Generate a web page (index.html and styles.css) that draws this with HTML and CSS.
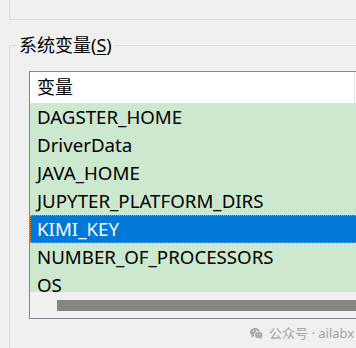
FILE: index.html
```html
<!DOCTYPE html>
<html lang="zh-CN">
<head>
<meta charset="utf-8">
<link rel="stylesheet" href="styles.css">
</head>
<body>
<div class="page">
  <div class="prev-group"></div>
  <div class="group">
    <div class="legend">系统变量(<span class="ul">S</span>)</div>
    <div class="listbox">
      <div class="header"><div class="col">变量</div></div>
      <div class="rows">
        <div class="row">DAGSTER_HOME</div>
        <div class="row">DriverData</div>
        <div class="row">JAVA_HOME</div>
        <div class="row">JUPYTER_PLATFORM_DIRS</div>
        <div class="row selected">KIMI_KEY</div>
        <div class="row">NUMBER_OF_PROCESSORS</div>
        <div class="row">OS</div>
      </div>
      <div class="hscroll"><div class="thumb"></div></div>
    </div>
  </div>
  <div class="watermark">
    <svg class="wx" width="13" height="11" viewBox="0 0 13 11">
      <ellipse cx="5" cy="4.3" rx="5" ry="4.2" fill="#a8a8a8"/>
      <path d="M1.8 7.2 L1.2 9.2 L3.6 8" fill="#a8a8a8"/>
      <ellipse cx="8.8" cy="7" rx="4.2" ry="3.5" fill="#a8a8a8" stroke="#f0f0f0" stroke-width="0.9"/>
      <path d="M11.2 9.6 L11.8 11 L10 10.2" fill="#a8a8a8"/>
      <circle cx="3.4" cy="3" r="0.7" fill="#f0f0f0"/>
      <circle cx="6.4" cy="3" r="0.7" fill="#f0f0f0"/>
      <circle cx="7.4" cy="6.3" r="0.55" fill="#f0f0f0"/>
      <circle cx="10.1" cy="6.3" r="0.55" fill="#f0f0f0"/>
    </svg>
    <span class="wm-text">公众号 · ailabx</span>
  </div>
</div>
</body>
</html>
```
FILE: styles.css
```css
html, body {
  margin: 0;
  padding: 0;
  background: #f0f0f0;
  overflow: hidden;
}
.page {
  position: relative;
  width: 356px;
  height: 348px;
  overflow: hidden;
  font-family: "Noto Sans", "Noto Sans CJK SC", sans-serif;
  font-size: 18px;
  color: #000;
}
.prev-group {
  margin-left: 9px;
  width: 420px;
  height: 19px;
  border-left: 1px solid #dcdcdc;
  border-bottom: 1px solid #dcdcdc;
}
.group {
  margin-top: 25px;
  margin-left: 9px;
  width: 420px;
  height: 320px;
  border-top: 1px solid #dcdcdc;
  border-left: 1px solid #dcdcdc;
}
.legend {
  width: fit-content;
  margin: -13px 0 0 7px;
  padding: 0 2px 0 2px;
  background: #f0f0f0;
  line-height: 24px;
  height: 24px;
}
.ul {
  text-decoration: underline;
  text-underline-offset: 2px;
}
.listbox {
  margin: 14px 0 0 19px;
  width: 390px;
  border: 1px solid #828790;
  background: #ffffff;
  font-size: 18.7px;
}
.header {
  display: flex;
  height: 31px;
  background: #ffffff;
}
.col {
  width: 317px;
  padding-left: 7px;
  line-height: 31px;
  border-right: 1px solid #e5e5e5;
  font-size: 18px;
}
.rows {
  height: 189px;
  overflow: hidden;
  background: #cce8cf;
}
.row {
  height: 28px;
  line-height: 28px;
  padding-left: 7px;
  white-space: nowrap;
}
.row.selected {
  background: #0078d7;
  color: #ffffff;
  outline: 1px dotted #d98a3a;
  outline-offset: -1px;
}
.hscroll {
  height: 26px;
  background: #f0f0f0;
  display: flex;
  align-items: center;
}
.thumb {
  margin-left: 27px;
  width: 340px;
  height: 11px;
  background: #858585;
}
.watermark {
  position: absolute;
  left: 250px;
  top: 325px;
  display: flex;
  align-items: center;
  gap: 6px;
  color: #a3a3a3;
  font-size: 13px;
  line-height: 16px;
}
.wx {
  display: block;
}
```
